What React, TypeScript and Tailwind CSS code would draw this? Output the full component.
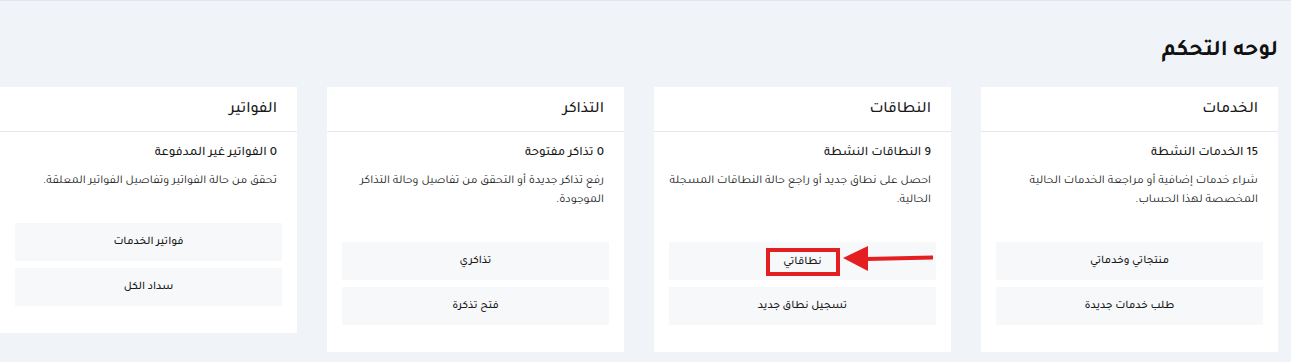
import React from "react";

type Card = {
  title: string;
  stat: string;
  desc: string;
  buttons: string[];
  highlight?: boolean;
};

const cards: Card[] = [
  {
    title: "الخدمات",
    stat: "15 الخدمات النشطة",
    desc: "شراء خدمات إضافية أو مراجعة الخدمات الحالية المخصصة لهذا الحساب.",
    buttons: ["منتجاتي وخدماتي", "طلب خدمات جديدة"],
  },
  {
    title: "النطاقات",
    stat: "9 النطاقات النشطة",
    desc: "احصل على نطاق جديد أو راجع حالة النطاقات المسجلة الحالية.",
    buttons: ["نطاقاتي", "تسجيل نطاق جديد"],
    highlight: true,
  },
  {
    title: "التذاكر",
    stat: "0 تذاكر مفتوحة",
    desc: "رفع تذاكر جديدة أو التحقق من تفاصيل وحالة التذاكر الموجودة.",
    buttons: ["تذاكري", "فتح تذكرة"],
  },
  {
    title: "الفواتير",
    stat: "0 الفواتير غير المدفوعة",
    desc: "تحقق من حالة الفواتير وتفاصيل الفواتير المعلقة.",
    buttons: ["فواتير الخدمات", "سداد الكل"],
  },
];

export default function App() {
  return (
    <div
      dir="rtl"
      className="h-[362px] w-full overflow-hidden border-t border-[#e3e7ed] bg-[#f0f3f8] pr-[13px] font-['Tajawal','Cairo','Noto_Sans_Arabic',sans-serif] text-[#1a1a1a]"
    >
      <h1 className="h-[86px] pt-[35px] text-[22.5px] font-bold leading-[32px] text-[#111]">لوحه التحكم</h1>
      <div className="flex items-start gap-[30px]">
        {cards.map((c) => (
          <div key={c.title} className="w-[297px] shrink-0 bg-white">
            <div className="flex h-[45px] items-center border-b border-[#e5e7eb] px-5 pt-[2px] text-[16px] font-medium">
              {c.title}
            </div>
            <div className={c.highlight ? "pl-1 pr-5 pt-3" : "pl-4 pr-5 pt-3"}>
              <div className="text-[13px] font-medium leading-[20px]">{c.stat}</div>
              <p className="mt-2 text-[12px] leading-[19px] text-[#222]">{c.desc}</p>
            </div>
            <div className="mt-8 flex flex-col gap-[7px] px-[15px] pb-[27px]">
              {c.buttons.map((b, i) => (
                <div
                  key={b}
                  className="relative flex h-[38px] items-center justify-center bg-[#f7f8fa] pt-[2px] text-[11.5px] font-medium"
                >
                  {c.highlight && i === 0 ? (
                    <>
                      <span className="flex h-[28px] w-[74px] items-center justify-center border-4 border-[#e41f22] pt-[1px]">
                        {b}
                      </span>
                      <svg
                        className="absolute left-[172px] top-[3px]"
                        width="92"
                        height="28"
                        viewBox="0 0 92 28"
                      >
                        <polygon points="2,13 27,1 27,26" fill="#e41f22" />
                        <line x1="25" y1="14" x2="92" y2="12.5" stroke="#e41f22" strokeWidth="4" />
                      </svg>
                    </>
                  ) : (
                    b
                  )}
                </div>
              ))}
            </div>
          </div>
        ))}
      </div>
    </div>
  );
}
